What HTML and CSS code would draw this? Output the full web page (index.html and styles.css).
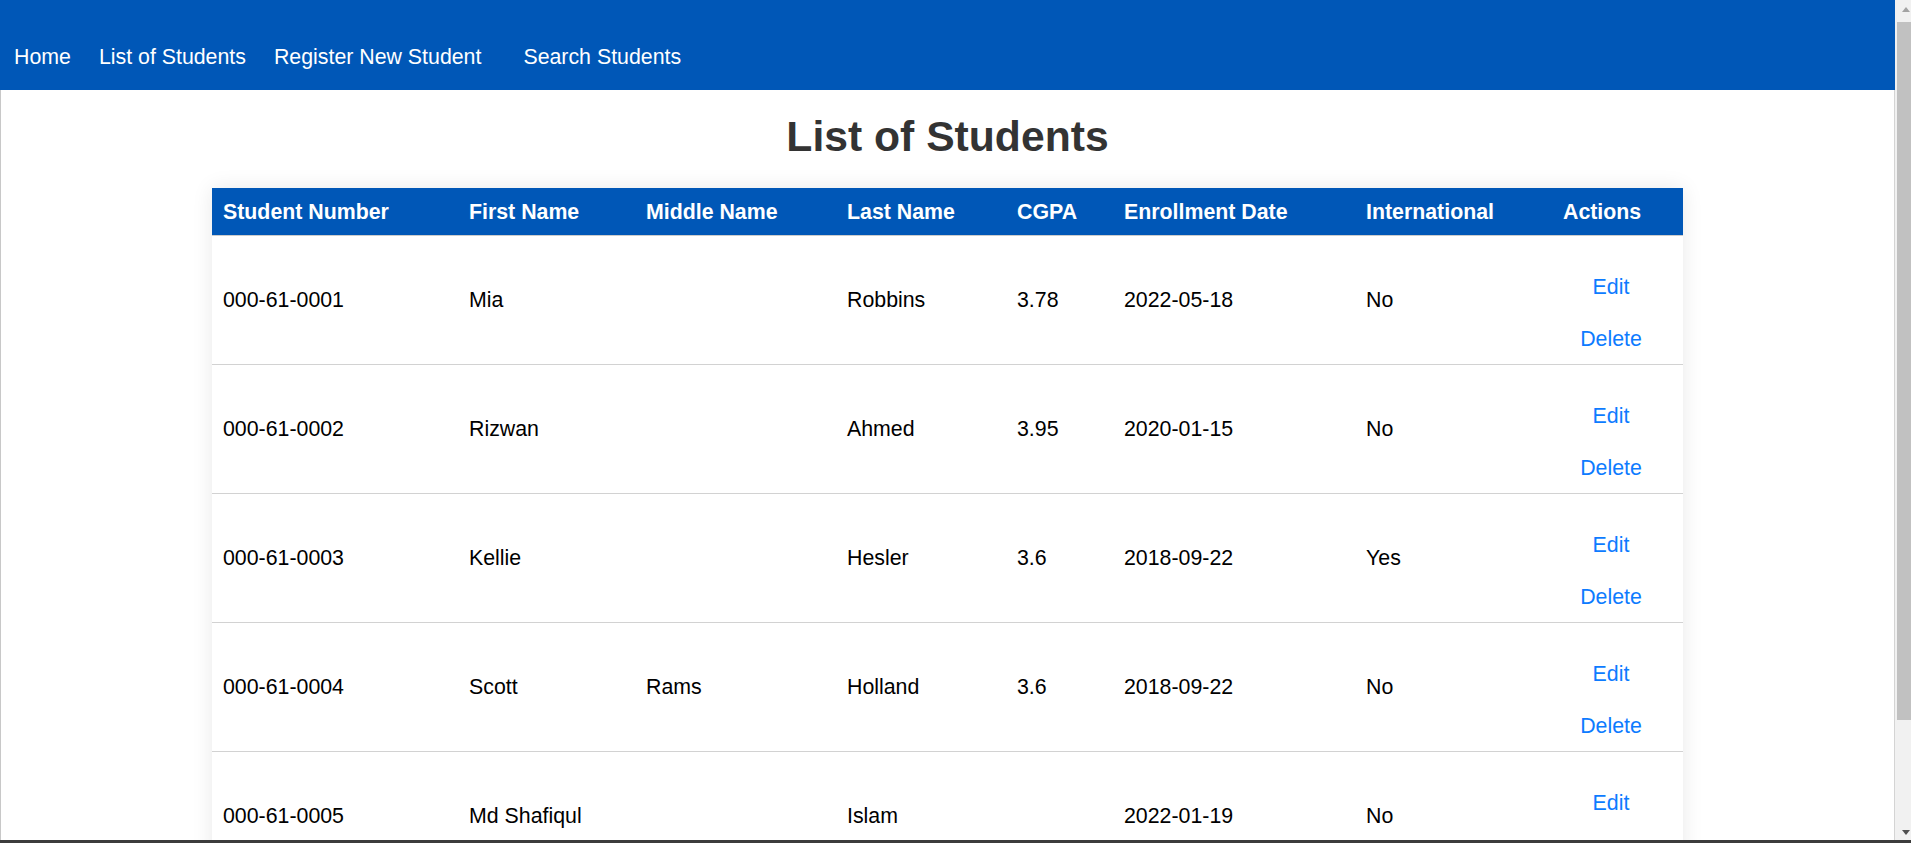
FILE: index.html
```html
<!DOCTYPE html>
<html lang="en">
<head>
<meta charset="utf-8">
<title>List of Students</title>
<link rel="stylesheet" href="styles.css">
</head>
<body>
<div class="screen">
  <div class="viewport">
    <div class="page">
      <nav class="topnav">
        <a href="#">Home</a>
        <a href="#">List of Students</a>
        <a href="#" class="wide">Register New Student</a>
        <a href="#">Search Students</a>
      </nav>
      <main class="content">
        <h1 class="title">List of Students</h1>
        <table class="students">
          <colgroup>
            <col class="c-num"><col class="c-first"><col class="c-middle"><col class="c-last">
            <col class="c-cgpa"><col class="c-date"><col class="c-intl"><col class="c-act">
          </colgroup>
          <thead>
            <tr>
              <th>Student Number</th><th>First Name</th><th>Middle Name</th><th>Last Name</th>
              <th>CGPA</th><th>Enrollment Date</th><th>International</th><th>Actions</th>
            </tr>
          </thead>
          <tbody>
            <tr>
              <td>000-61-0001</td><td>Mia</td><td></td><td>Robbins</td><td>3.78</td><td>2022-05-18</td><td>No</td>
              <td class="actions"><a href="#">Edit</a><a href="#">Delete</a></td>
            </tr>
            <tr>
              <td>000-61-0002</td><td>Rizwan</td><td></td><td>Ahmed</td><td>3.95</td><td>2020-01-15</td><td>No</td>
              <td class="actions"><a href="#">Edit</a><a href="#">Delete</a></td>
            </tr>
            <tr>
              <td>000-61-0003</td><td>Kellie</td><td></td><td>Hesler</td><td>3.6</td><td>2018-09-22</td><td>Yes</td>
              <td class="actions"><a href="#">Edit</a><a href="#">Delete</a></td>
            </tr>
            <tr>
              <td>000-61-0004</td><td>Scott</td><td>Rams</td><td>Holland</td><td>3.6</td><td>2018-09-22</td><td>No</td>
              <td class="actions"><a href="#">Edit</a><a href="#">Delete</a></td>
            </tr>
            <tr>
              <td>000-61-0005</td><td>Md Shafiqul</td><td></td><td>Islam</td><td></td><td>2022-01-19</td><td>No</td>
              <td class="actions"><a href="#">Edit</a><a href="#">Delete</a></td>
            </tr>
          </tbody>
        </table>
      </main>
    </div>
    <div class="scrollbar">
      <div class="sb-arrow sb-up"></div>
      <div class="sb-thumb"></div>
      <div class="sb-track"></div>
      <div class="sb-arrow sb-down"></div>
    </div>
  </div>
  <div class="frame-bottom"></div>
</div>
</body>
</html>
```
FILE: styles.css
```css
html, body {
  margin: 0;
  padding: 0;
  height: 100%;
  overflow: hidden;
}

body {
  font-family: "Liberation Sans", Arial, sans-serif;
  background: #ffffff;
  color: #000000;
}

.screen {
  width: 1911px;
  height: 843px;
  display: flex;
  flex-direction: column;
}

.viewport {
  flex: 1;
  min-height: 0;
  display: flex;
  overflow: hidden;
}

.page {
  width: 1895px;
  flex-shrink: 0;
  display: flex;
  flex-direction: column;
  overflow: hidden;
}

.topnav {
  height: 90px;
  flex-shrink: 0;
  box-sizing: border-box;
  background: #0057b7;
  padding: 45px 0 0 14px;
  display: flex;
  align-items: flex-start;
}

.topnav a {
  color: #ffffff;
  text-decoration: none;
  font-size: 21.33px;
  line-height: 24px;
  margin-right: 28px;
  white-space: nowrap;
}

.topnav a.wide {
  margin-right: 42px;
}

.content {
  flex: 1;
  min-height: 0;
  border-left: 1px solid #c8c8c8;
  border-right: 1px solid #d4d4d4;
}

.title {
  margin: 22px 0 27px;
  font-size: 42.67px;
  line-height: 49px;
  font-weight: bold;
  text-align: center;
  color: #333333;
}

.students {
  width: 1471px;
  margin: 0 auto;
  border-collapse: collapse;
  table-layout: fixed;
  box-shadow: 0 0 20px rgba(0, 0, 0, 0.09);
  background: #ffffff;
}

.c-num { width: 246px; }
.c-first { width: 177px; }
.c-middle { width: 201px; }
.c-last { width: 170px; }
.c-cgpa { width: 107px; }
.c-date { width: 242px; }
.c-intl { width: 197px; }
.c-act { width: 131px; }

.students th {
  background: #0057b7;
  color: #ffffff;
  font-weight: bold;
  font-size: 21.33px;
  line-height: 26px;
  text-align: left;
  padding: 11px 11px 10px;
  border-bottom: 1px solid #cccccc;
  white-space: nowrap;
}

.students td {
  font-size: 21.33px;
  line-height: 24px;
  padding: 0 11px;
  vertical-align: middle;
  border-bottom: 1px solid #d2d2d2;
  color: #000000;
  white-space: nowrap;
}

.students td.actions {
  padding: 38.8px 24px 12.5px 11px;
  text-align: center;
}

.students td.actions a {
  display: block;
  color: #0d7bff;
  text-decoration: none;
}

.students td.actions a + a {
  margin-top: 28.7px;
}

.scrollbar {
  flex: 1;
  background: #f1f1f1;
  display: flex;
  flex-direction: column;
  align-items: stretch;
}

.sb-arrow {
  height: 22px;
  flex-shrink: 0;
  position: relative;
}

.sb-up::after,
.sb-down::after {
  content: "";
  position: absolute;
  left: 7px;
  width: 0;
  height: 0;
  border-left: 4.5px solid transparent;
  border-right: 4.5px solid transparent;
}

.sb-up::after {
  top: 7px;
  border-bottom: 5px solid #a3a3a3;
}

.sb-down {
  height: 18px;
}

.sb-down::after {
  top: 8px;
  border-top: 5px solid #505050;
}

.sb-thumb {
  height: 698px;
  flex-shrink: 0;
  margin-left: 2px;
  background: #c1c1c1;
}

.sb-track {
  flex: 1;
}

.frame-bottom {
  height: 3px;
  flex-shrink: 0;
  background: #3c3c3c;
}
```
